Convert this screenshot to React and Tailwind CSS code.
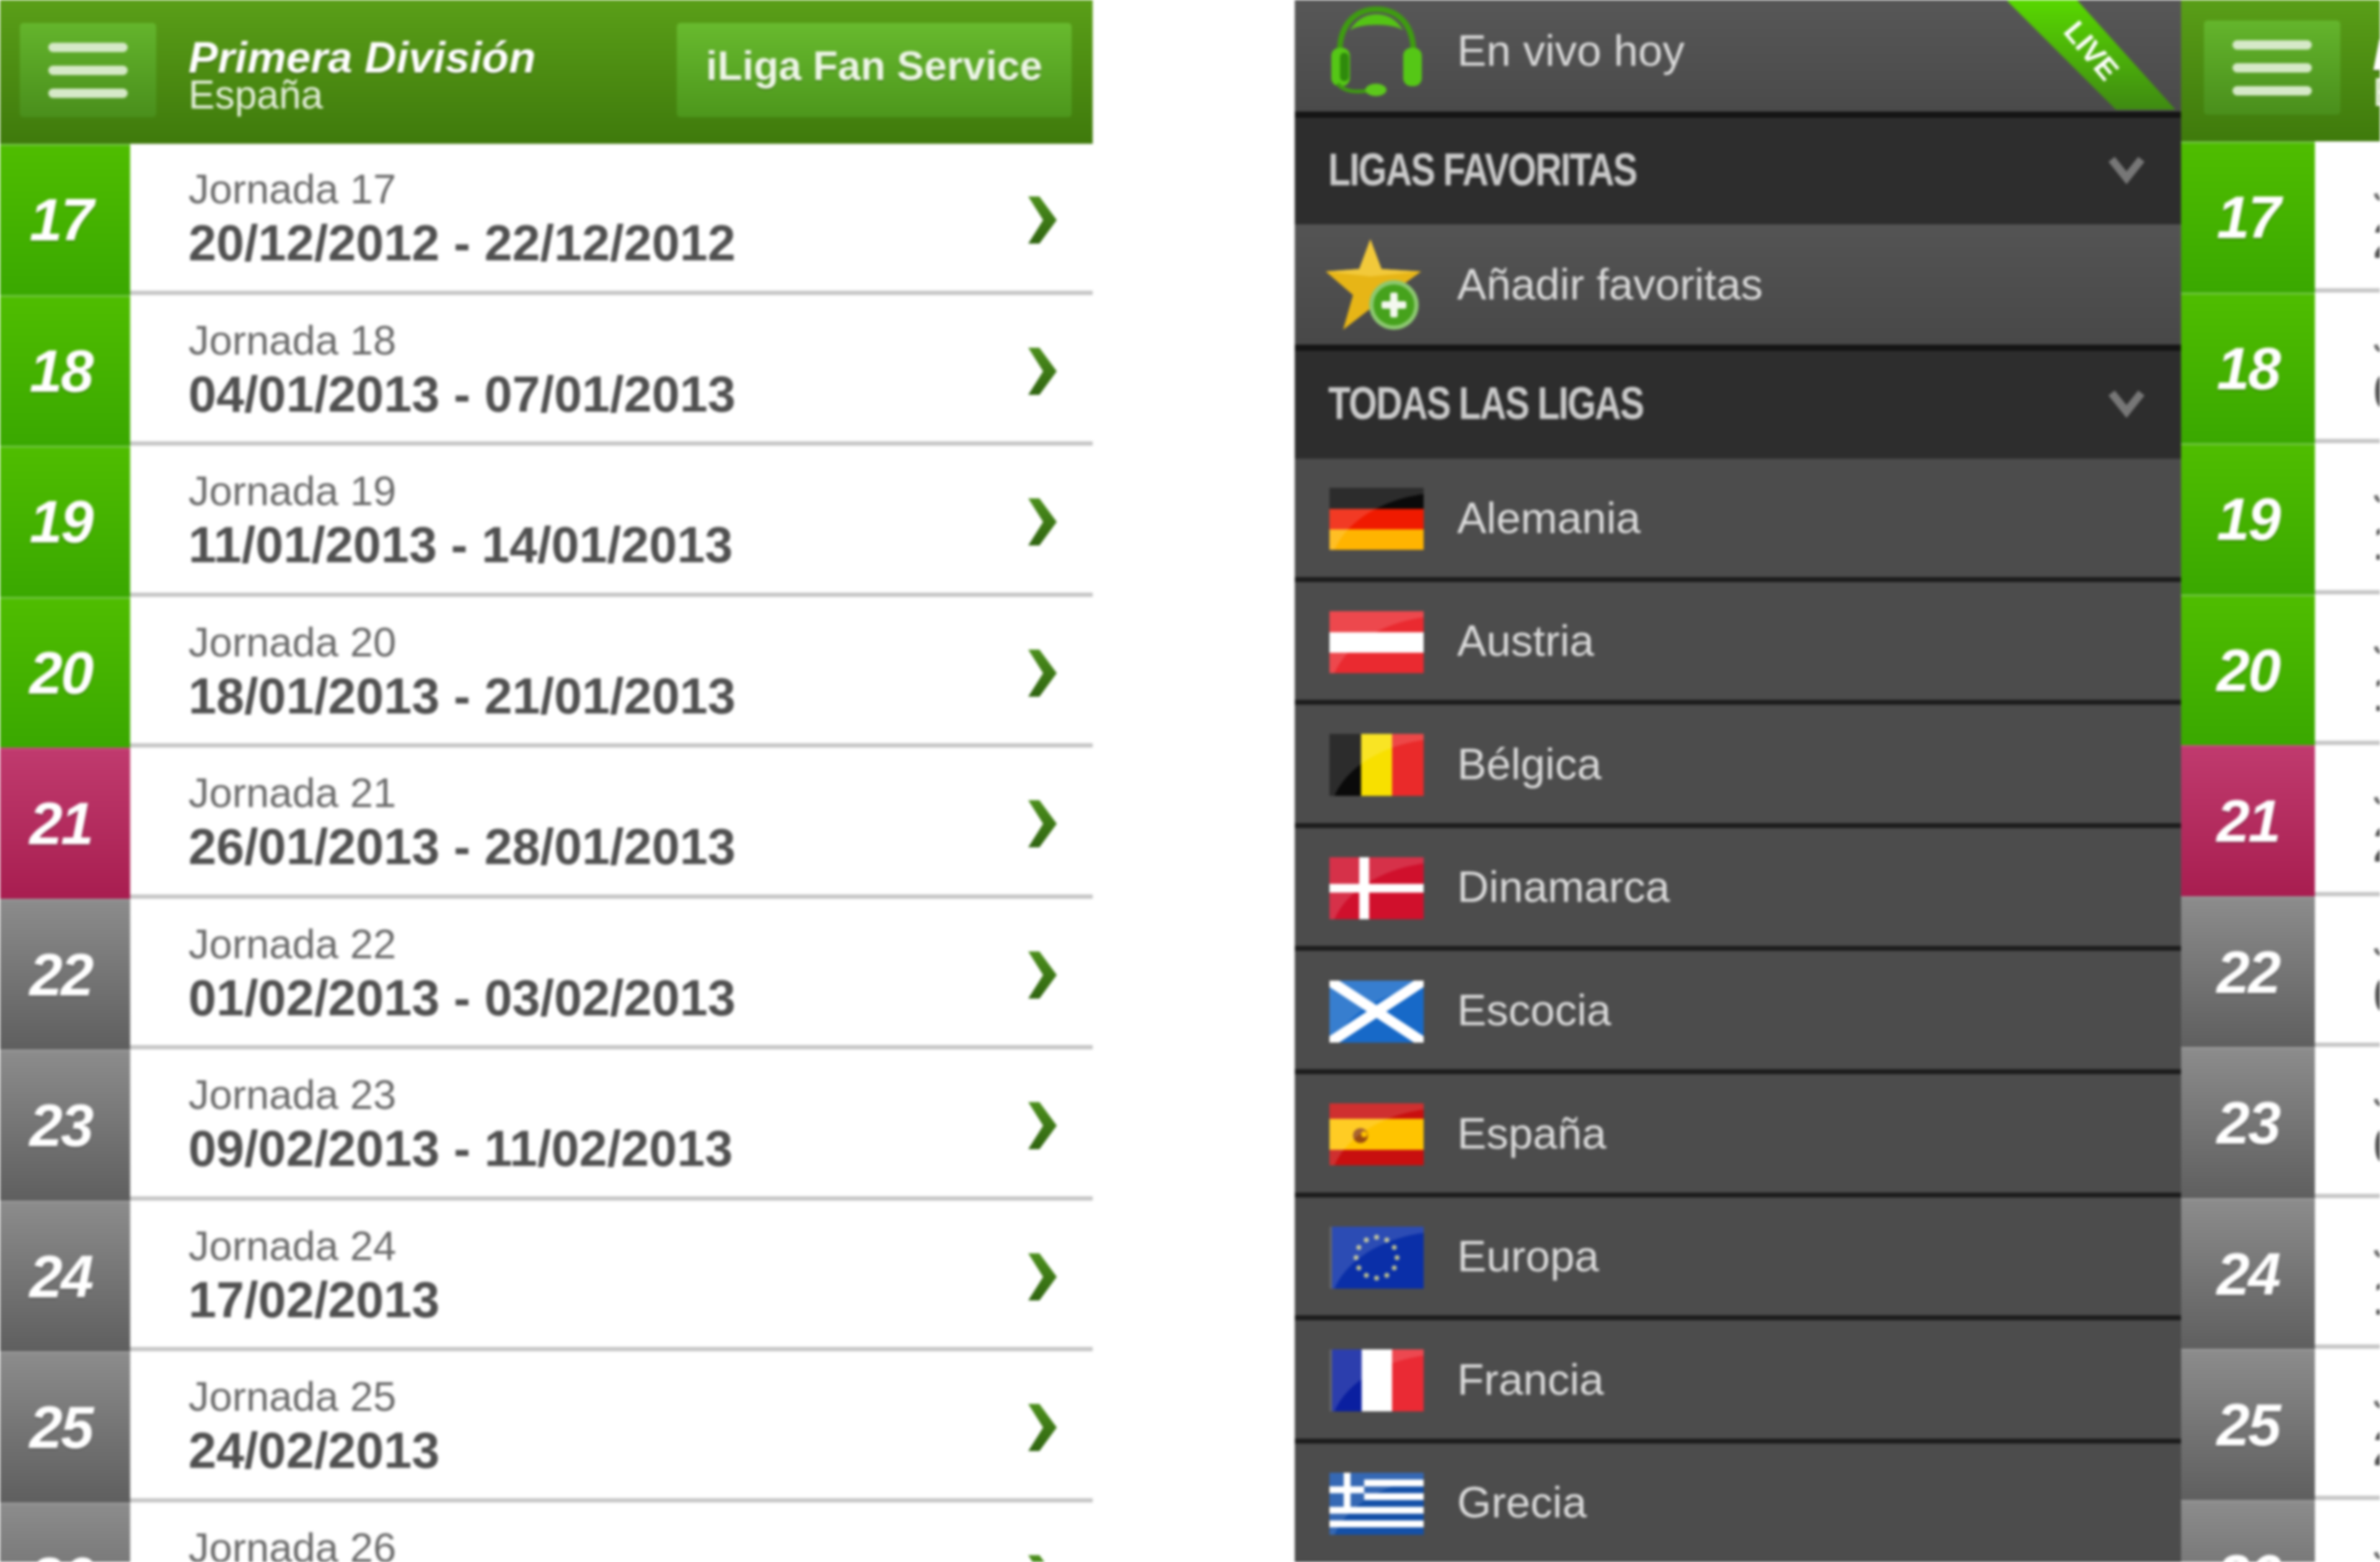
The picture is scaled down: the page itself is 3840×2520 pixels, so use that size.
const rounds = [
  { n: 17, date: "20/12/2012 - 22/12/2012", kind: "green" },
  { n: 18, date: "04/01/2013 - 07/01/2013", kind: "green" },
  { n: 19, date: "11/01/2013 - 14/01/2013", kind: "green" },
  { n: 20, date: "18/01/2013 - 21/01/2013", kind: "green" },
  { n: 21, date: "26/01/2013 - 28/01/2013", kind: "live" },
  { n: 22, date: "01/02/2013 - 03/02/2013", kind: "grey" },
  { n: 23, date: "09/02/2013 - 11/02/2013", kind: "grey" },
  { n: 24, date: "17/02/2013", kind: "grey" },
  { n: 25, date: "24/02/2013", kind: "grey" },
  { n: 26, date: "03/03/2013", kind: "grey" },
];

const cellColors = {
  green: "from-[#4fbd00] to-[#3aa800] border-[#74c848]",
  live: "from-[#c03a6e] to-[#a81d50] border-[#c4507a]",
  grey: "from-[#8c8c8c] to-[#5f5f5f] border-[#989898]",
};

function Chevron() {
  return (
    <svg width="50" height="76" viewBox="0 0 50 76" className="mt-[10px] shrink-0">
      <defs>
        <linearGradient id="chev" x1="0" y1="0" x2="0" y2="1">
          <stop offset="0" stopColor="#4c8f1c" />
          <stop offset="1" stopColor="#2f6410" />
        </linearGradient>
      </defs>
      <polygon points="4,0 22,0 50,38 22,76 4,76 28,38" fill="url(#chev)" />
    </svg>
  );
}

function Phone({ headerClass, cellClass }) {
  return (
    <div className="w-[1763px] shrink-0">
      <div className={`flex items-start bg-gradient-to-b from-[#5a9f18] to-[#3f7a0c] pt-[37px] ${headerClass}`}>
        <div className="flex h-[152px] w-[220px] shrink-0 flex-col justify-center gap-[22px] rounded-[6px] bg-gradient-to-b from-[#64b52c] to-[#4a8f1c] px-[46px]">
          <div className="h-[15px] rounded-full bg-[#d6e9c8]" />
          <div className="h-[15px] rounded-full bg-[#d6e9c8]" />
          <div className="h-[15px] rounded-full bg-[#d6e9c8]" />
        </div>
        <div className="mt-[26px] ml-[52px] w-[788px] shrink-0 text-white [font-family:'Liberation_Sans',sans-serif]">
          <div className="text-[71px] leading-[60px] font-bold italic [text-shadow:0_2px_2px_rgba(0,0,0,.35)]">
            Primera División
          </div>
          <div className="text-[64px] leading-[61px] text-[#e4efdb]">España</div>
        </div>
        <div className="flex h-[152px] w-[637px] shrink-0 items-center justify-center rounded-[6px] bg-gradient-to-b from-[#68ba2e] to-[#4d971c] pb-[14px] text-[66px] font-bold text-[#edf6e6] [font-family:'Liberation_Sans',sans-serif] [text-shadow:0_2px_2px_rgba(0,0,0,.3)]">
          iLiga Fan Service
        </div>
      </div>

      {rounds.map((r) => (
        <div key={r.n} className="flex h-[243.5px]">
          <div className={`flex shrink-0 items-center justify-center border-t-[3px] bg-gradient-to-b text-[96px] font-bold tracking-[-3px] text-white italic [font-family:'Liberation_Sans',sans-serif] [text-shadow:0_2px_3px_rgba(0,0,0,.3)] ${cellClass} ${cellColors[r.kind]}`}>
            {r.n}
          </div>
          <div className="flex min-w-0 flex-1 items-center border-b-[7px] border-[#c6c6c6] bg-white pr-[58px] pl-[94px] [font-family:'Liberation_Sans',sans-serif]">
            <div className="flex-1 whitespace-nowrap">
              <div className="mt-[4px] text-[67px] leading-[76px] text-[#6a6a6a]">Jornada {r.n}</div>
              <div className="mt-[4px] text-[81px] leading-[90px] font-bold text-[#505050]">{r.date}</div>
            </div>
            <Chevron />
          </div>
        </div>
      ))}
    </div>
  );
}

function Headset() {
  return (
    <svg width="146" height="146" viewBox="0 0 146 146" className="shrink-0">
      <path d="M14 84C10 30 40 6 73 6s63 24 59 78" fill="none" stroke="#3e9c10" strokeWidth="9" />
      <path d="M30 40C42 20 58 14 73 14s31 6 43 26C100 28 46 28 30 40Z" fill="#54c414" />
      <rect x="0" y="68" width="30" height="62" rx="13" fill="#55c716" />
      <rect x="116" y="68" width="30" height="62" rx="13" fill="#55c716" />
      <rect x="14" y="76" width="14" height="46" rx="7" fill="#2f8a0c" />
      <path d="M10 126C22 140 40 140 62 137" fill="none" stroke="#3e9c10" strokeWidth="6" />
      <ellipse cx="72" cy="136" rx="17" ry="10" fill="#5cc91b" />
    </svg>
  );
}

function StarPlus() {
  return (
    <svg width="154" height="146" viewBox="0 0 154 146" className="shrink-0">
      <polygon points="72,0 90,48 154,52 104,88 118,146 72,112 28,146 44,90 0,52 54,48" fill="#e7b516" />
      <polygon points="72,0 90,48 154,52 72,60 0,52 54,48" fill="#f2c93a" />
      <circle cx="110" cy="106" r="40" fill="#8cc870" />
      <circle cx="110" cy="106" r="33" fill="#46a21c" />
      <rect x="104" y="86" width="12" height="40" rx="3" fill="#f3f8ef" />
      <rect x="90" y="100" width="40" height="12" rx="3" fill="#f3f8ef" />
    </svg>
  );
}

function Flag({ children }) {
  return (
    <svg width="152" height="100" viewBox="0 0 152 100" className="shrink-0">
      {children}
      <path d="M0 0H152V10C90 18 30 50 8 100H0Z" fill="#fff" opacity=".14" />
    </svg>
  );
}

const euroStars = Array.from({ length: 12 }, (_, i) => {
  const a = (i / 12) * Math.PI * 2;
  return { x: 76 + Math.cos(a) * 33, y: 50 + Math.sin(a) * 33 };
});

const leagues = [
  {
    name: "Alemania",
    flag: (
      <>
        <rect width="152" height="34" fill="#0a0a0a" />
        <rect y="34" width="152" height="33" fill="#f01a00" />
        <rect y="67" width="152" height="33" fill="#ffb400" />
      </>
    ),
  },
  {
    name: "Austria",
    flag: (
      <>
        <rect width="152" height="100" fill="#ea2a30" />
        <rect y="34" width="152" height="33" fill="#fff" />
      </>
    ),
  },
  {
    name: "Bélgica",
    flag: (
      <>
        <rect width="51" height="100" fill="#0a0a0a" />
        <rect x="51" width="51" height="100" fill="#f8e000" />
        <rect x="101" width="51" height="100" fill="#ea2a2a" />
      </>
    ),
  },
  {
    name: "Dinamarca",
    flag: (
      <>
        <rect width="152" height="100" fill="#d0102c" />
        <rect x="48" width="16" height="100" fill="#fff" />
        <rect y="43" width="152" height="14" fill="#fff" />
      </>
    ),
  },
  {
    name: "Escocia",
    flag: (
      <>
        <rect width="152" height="100" fill="#1769c8" />
        <path d="M0 0L152 100M152 0L0 100" stroke="#fff" strokeWidth="17" />
      </>
    ),
  },
  {
    name: "España",
    flag: (
      <>
        <rect width="152" height="100" fill="#c80f0f" />
        <rect y="25" width="152" height="50" fill="#ffc400" />
        <circle cx="50" cy="52" r="12" fill="#9a4a10" />
        <circle cx="56" cy="50" r="5" fill="#ffc400" />
      </>
    ),
  },
  {
    name: "Europa",
    flag: (
      <>
        <rect x="4" width="148" height="100" fill="#0a2fa8" />
        {euroStars.map((s, i) => (
          <circle key={i} cx={s.x} cy={s.y} r="4" fill="#b8bc90" />
        ))}
      </>
    ),
  },
  {
    name: "Francia",
    flag: (
      <>
        <rect x="4" width="48" height="100" fill="#0a1fa0" />
        <rect x="52" width="50" height="100" fill="#fff" />
        <rect x="101" width="51" height="100" fill="#ea2a34" />
      </>
    ),
  },
  {
    name: "Grecia",
    flag: (
      <>
        <rect width="152" height="100" fill="#1450a8" />
        <rect y="11" width="152" height="11" fill="#fff" />
        <rect y="33" width="152" height="11" fill="#fff" />
        <rect y="55" width="152" height="11" fill="#fff" />
        <rect y="77" width="152" height="11" fill="#fff" />
        <rect width="56" height="55" fill="#1450a8" />
        <rect x="23" width="11" height="55" fill="#fff" />
        <rect y="22" width="56" height="11" fill="#fff" />
      </>
    ),
  },
];

function SectionHeader({ title, height }) {
  return (
    <div className={`flex items-center justify-between bg-[#2d2d2d] pr-[58px] pl-[54px] ${height}`}>
      <span className="mb-[5px] inline-block origin-left scale-x-[0.8] text-[74px] font-bold tracking-[-2.5px] text-[#c9c9c9] [font-family:'Liberation_Sans',sans-serif]">
        {title}
      </span>
      <svg width="60" height="46" viewBox="0 0 60 46" className="mb-[4px] shrink-0">
        <polyline points="6,6 30,36 54,6" fill="none" stroke="#777" strokeWidth="13" />
      </svg>
    </div>
  );
}

function Menu() {
  return (
    <div className="relative h-[2520px] w-[1430px] shrink-0 overflow-hidden bg-[#4c4c4c] text-[71px] text-[#dadada] [font-family:'Liberation_Sans',sans-serif]">
      <div className="flex h-[190px] items-center gap-[57px] border-b-[10px] border-[#141414] bg-gradient-to-b from-[#575757] to-[#4a4a4a] pb-[16px] pl-[59px]">
        <Headset />
        <span>En vivo hoy</span>
      </div>
      <svg width="280" height="180" viewBox="0 0 280 180" className="absolute top-0 right-0">
        <defs>
          <linearGradient id="ribbon" x1="0" y1="0" x2="0" y2="1">
            <stop offset="0" stopColor="#58d800" />
            <stop offset="1" stopColor="#3f8a12" />
          </linearGradient>
        </defs>
        <polygon points="-2,0 112,0 271,177 175,177" fill="url(#ribbon)" />
        <text
          x="135"
          y="98"
          fill="#fff"
          fontSize="48"
          fontWeight="700"
          textAnchor="middle"
          transform="rotate(50 135 82)"
          fontFamily="'Liberation Sans',sans-serif"
        >
          LIVE
        </text>
      </svg>

      <SectionHeader title="LIGAS FAVORITAS" height="h-[172px]" />

      <div className="flex h-[204px] items-center gap-[58px] border-b-[10px] border-[#141414] bg-gradient-to-b from-[#545454] to-[#484848] pl-[50px]">
        <StarPlus />
        <span>Añadir favoritas</span>
      </div>

      <SectionHeader title="TODAS LAS LIGAS" height="h-[174px]" />

      {leagues.map((l) => (
        <div
          key={l.name}
          className="flex h-[198.6px] items-center gap-[54px] border-b-[8px] border-[#1c1c1c] pt-[4px] pl-[56px]"
        >
          <Flag>{l.flag}</Flag>
          <span className="-mt-[3px]">{l.name}</span>
        </div>
      ))}
    </div>
  );
}

export default function App() {
  return (
    <div className="flex h-[2520px] w-[3840px] overflow-hidden bg-white blur-[2px]">
      <Phone headerClass="h-[232px] pl-[32px]" cellClass="w-[210px] pr-[14px]" />
      <div className="ml-[326px] shrink-0">
        <Menu />
      </div>
      <div className="-mt-[4px] min-w-0 flex-1 overflow-hidden">
        <Phone headerClass="h-[232px] pl-[37px]" cellClass="w-[216px]" />
      </div>
    </div>
  );
}
